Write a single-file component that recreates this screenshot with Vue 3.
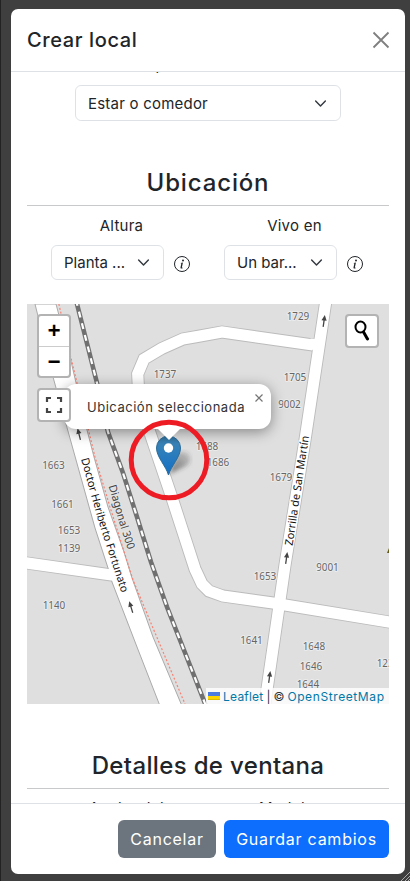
<script setup>
const houses = [
  [298, 320, '1729'], [165, 378, '1737'], [295, 381, '1705'], [289.5, 408, '9002'],
  [207, 450, '1688'], [218, 466, '1686'], [53.5, 469, '1663'], [62.5, 508, '1661'],
  [69, 534, '1653'], [69, 552, '1139'], [281, 481, '1679'], [265, 580, '1653'],
  [327.5, 571, '9001'], [54, 609, '1140'], [251.5, 644, '1641'], [314, 650, '1648'],
  [311, 670, '1646'], [308, 688, '1644'], [388, 667, '1231']
]
const arrows = [[324, 321, 8], [79, 434, -14], [286.5, 558, 8], [131, 607, -17], [269.500, 677, 8]]
const selects = [
  { label: 'Altura', value: 'Planta ...' },
  { label: 'Vivo en', value: 'Un bar...' }
]
</script>

<template>
  <main class="page">
    <section class="modal">
      <header class="head">
        <h1>Crear local</h1>
        <svg class="close" viewBox="0 0 16 16"><path d="M.5.5l15 15M15.500.5l-15 15" /></svg>
      </header>

      <div class="body">
        <div class="kind"><span>Tipo de habitación</span></div>
        <div class="select wide">
          <span>Estar o comedor</span>
          <svg class="chev" viewBox="0 0 16 16"><path d="M2 5l6 6 6-6" /></svg>
        </div>
        <h2 class="location">Ubicación</h2>
        <div class="fields">
          <div v-for="s in selects" :key="s.label" class="field">
            <label>{{ s.label }}</label>
            <div class="row">
              <div class="select">
                <span>{{ s.value }}</span>
                <svg class="chev" viewBox="0 0 16 16"><path d="M2 5l6 6 6-6" /></svg>
              </div>
              <svg class="info" viewBox="0 0 16 16">
                <circle cx="8" cy="8" r="7.5" />
                <path d="M8.93 6.588l-2.29.287-.082.38.45.083c.294.07.352.176.288.469l-.738 3.468c-.194.897.105 1.319.808 1.319.545 0 1.178-.252 1.465-.598l.088-.416c-.2.176-.492.246-.686.246-.275 0-.375-.193-.304-.533z" />
                <circle class="dot" cx="9" cy="4.5" r="1" />
              </svg>
            </div>
          </div>
        </div>

        <div class="map">
          <svg class="tiles" viewBox="27 304 362 400">
            <rect x="27" y="304" width="362" height="400" fill="#dfdfdf" />
            <g class="casing">
              <path d="M313 345L222 332 200 336 183 339 161.700 348.500 144 359 137.700 374 138.500 390 149 430 172 498 195 569 202 584 209 591 223 596 273 603 395 623" />
              <path d="M326 300L305 440 285 565 264 710" />
              <path d="M20 562L115 575.500" />
            </g>
            <path d="M35 304L53 377 66 424 95 528 108 568 112 582 137 647 160 706H182L153 637 132 578 124 552 108 507 94 457 87 430 70 357 56 304z" fill="#fff" stroke="#aaa" stroke-width="1" />
            <g class="road">
              <path d="M313 345L222 332 200 336 183 339 161.700 348.500 144 359 137.700 374 138.500 390 149 430 172 498 195 569 202 584 209 591 223 596 273 603 395 623" />
              <path d="M320 345L310 344" />
              <path d="M326 300L305 440 285 565 264 710" />
              <path d="M20 562L115 575.500" />
            </g>
            <path class="foot" d="M58 300L70 354 88 428 95 457 110 507 133 580 153 628 185 704" />
            <path class="rail" d="M76 300L97 383 108 432 123 473 137 517 151 562 167 607 206 706" />
            <path class="ties" d="M76 300L97 383 108 432 123 473 137 517 151 562 167 607 206 706" />
            <g class="houses">
              <text v-for="h in houses" :key="h[0] + '-' + h[1]" :x="h[0]" :y="h[1]" textLength="22.500">{{ h[2] }}</text>
            </g>
            <g v-for="a in arrows" :key="a[1]" :transform="`translate(${a[0]} ${a[1]}) rotate(${a[2]})`">
              <path d="M0 6V-2" stroke="#444" stroke-width="1.300" /><path d="M0-6L2.600-.5H-2.600z" fill="#444" />
            </g>
            <path id="doctor" d="M81 459L98 520 126 607" fill="none" />
            <text class="street"><textPath href="#doctor" textLength="140">Doctor Heriberto Fortunato</textPath></text>
            <path id="diagonal" d="M108.500 486L118 519 131 560" fill="none" />
            <text class="street pale"><textPath href="#diagonal" textLength="67">Diagonal 300</textPath></text>
            <text class="street" transform="translate(292.500 546) rotate(-81.500)" textLength="111">Zorrilla de San Martín</text>
            <path d="M387 553l2-5v5z" fill="#655b15" />
          </svg>

          <div class="zoomer"><b>+</b><b>−</b></div>
          <div class="full"><svg viewBox="0 0 18 18"><path d="M2 6V2h4M12 2h4v4M16 12v4h-4M6 16H2v-4" /></svg></div>
          <div class="search"><svg viewBox="0 0 18 22"><ellipse cx="7.500" cy="7" rx="5" ry="5.500" /><path d="M10.500 12l4 7" /></svg></div>

          <svg class="marker" viewBox="128 418 90 84">
            <defs>
              <linearGradient id="pin" x2="0" y2="1"><stop offset="0" stop-color="#2e6c97" /><stop offset=".2" stop-color="#3883b7" /><stop offset="1" stop-color="#126fc6" /></linearGradient>
              <linearGradient id="shade" x1="0" y1="1" x2="1" y2="0"><stop offset="0" stop-color="#333" stop-opacity=".65" /><stop offset="1" stop-color="#333" stop-opacity=".15" /></linearGradient>
              <filter id="soft"><feGaussianBlur stdDeviation="2" /></filter>
            </defs>
            <path d="M169 474L178 453Q188 450 190 457T182 468z" fill="url(#shade)" filter="url(#soft)" />
            <path d="M168.500 475C166 466 156.500 457 156.500 448A12 12 0 0 1 180.500 448C180.500 457 171 466 168.500 475z" fill="url(#pin)" stroke="#2e6c97" />
            <circle cx="168.500" cy="448" r="4.700" fill="#fff" />
          </svg>

          <div class="popup"><span>Ubicación seleccionada</span><svg class="pop-close" viewBox="0 0 8 8"><path d="M.5.5l7 7M7.500.5l-7 7" /></svg></div>
          <svg class="ring" viewBox="0 0 82 82"><path d="M30 10h22l-11 11z" fill="#fff" /><circle cx="41" cy="41" r="37.800" /></svg>
          <div class="credit">
            <svg viewBox="0 0 12 8"><path fill="#4C7BE1" d="M0 0h12v4H0z" /><path fill="#FFD500" d="M0 4h12v3H0z" /><path fill="#E0BC00" d="M0 7h12v1H0z" /></svg>
            <a class="leaf">Leaflet</a><span class="sep">|</span><span class="copy">©</span><a class="osm">OpenStreetMap</a>
          </div>
        </div>

        <h2 class="details">Detalles de ventana</h2>
        <div class="cut"><span>Ancho del</span><span>Modelo</span></div>
      </div>

      <footer class="foot-bar">
        <button class="cancel">Cancelar</button>
        <button class="save">Guardar cambios</button>
      </footer>
    </section>
    <svg class="grip" viewBox="0 0 10 10"><path d="M1 10L10 1M5 10L10 5M8 10l2-2" /></svg>
  </main>
</template>

<style>
body { background: #3f3f3f; overflow: hidden; }
</style>

<style scoped>
* { box-sizing: border-box; }
.page { position: relative; width: 410px; height: 881px; padding: 9px 5px 7px 10px; border-left: 1px solid #222; background: #3f3f3f; font-family: Inter, "Liberation Sans", sans-serif; color: #212529; font-size: 15px; }
.modal { width: 394px; height: 865px; background: #fff; border-radius: 7px; display: flex; flex-direction: column; overflow: hidden; }
.head { height: 63px; flex: none; padding: 0 16px; border-bottom: 1px solid #dee2e6; display: flex; justify-content: space-between; align-items: center; }
h1 { margin: 0; font-size: 20px; font-weight: 500; letter-spacing: .62px; }
svg { display: block; flex: none; }
.close { width: 16px; height: 16px; fill: none; stroke: #7f7f7f; stroke-width: 1.8; overflow: visible; }
.body { flex: 1; min-height: 0; overflow: hidden; padding: 0 16px; }
.kind { height: 13px; display: flex; align-items: flex-end; justify-content: center; line-height: 24px; padding-bottom: 8px; }
.select { width: 113px; height: 35px; border: 1px solid #dee2e6; border-radius: 6px; padding: 0 13px 0 12px; display: flex; align-items: center; justify-content: space-between; white-space: nowrap; }
.wide { width: 266px; height: 36px; margin: 0 auto; letter-spacing: .22px; }
.chev { width: 13px; height: 13px; fill: none; stroke: #343a40; stroke-width: 1.8; stroke-linecap: round; stroke-linejoin: round; }
h2 { margin: 0; text-align: center; font-weight: 500; font-size: 24px; line-height: 32px; border-bottom: 1px solid #c8c9ca; }
.location { margin-top: 46px; height: 39px; letter-spacing: .85px; }
.fields { display: flex; gap: 34px; padding: 8px 0 0 24px; }
.field { width: 139px; }
label { display: block; line-height: 24px; width: 141px; text-align: center; letter-spacing: .25px; }
.row { display: flex; align-items: center; gap: 10px; margin-top: 7px; }
.info { width: 16px; height: 16px; margin-top: 3px; fill: #212529; overflow: visible; }
.info circle:first-child { fill: none; stroke: #212529; }
.map { position: relative; margin-top: 24px; width: 362px; height: 400px; overflow: hidden; }
.tiles { width: 362px; height: 400px; }
.casing path { fill: none; stroke: #bbb; stroke-width: 13; }
.road path { fill: none; stroke: #fff; stroke-width: 11.200; }
.foot { fill: none; stroke: #fa8072; stroke-width: 1.200; stroke-dasharray: 2 2; }
.rail { fill: none; stroke: #707070; stroke-width: 4.6; }
.ties { fill: none; stroke: #fff; stroke-width: 2.2; stroke-dasharray: 6 6; }
.houses { font: 10px "Noto Sans"; fill: #666; text-anchor: middle; paint-order: stroke; stroke: #ebebeb; stroke-width: 2px; }
.street { font: 11px "Noto Sans"; fill: #111; paint-order: stroke; stroke: #fff; stroke-width: 2px; }
.pale { fill: #444; stroke: #e5e5e5; }
.zoomer, .full, .search { position: absolute; border: 2px solid #b3b3b3; border-radius: 4px; background: #fff; background-clip: padding-box; }
.zoomer { left: 10px; top: 10px; width: 34px; height: 64px; }
.zoomer b { display: block; height: 30px; font: bold 22px/34px "Liberation Mono", monospace; color: #000; text-align: center; }
.zoomer b:first-child { height: 31px; border-bottom: 1px solid #ccc; }
.full { left: 10px; top: 84px; width: 34px; height: 34px; display: grid; place-items: center; }
.full svg { width: 18px; height: 18px; fill: none; stroke: #444; stroke-width: 2.200; }
.search { left: 318px; top: 10px; width: 34px; height: 34px; display: grid; place-items: center; }
.search svg { width: 18px; height: 22px; fill: none; stroke: #000; stroke-width: 2; stroke-linecap: round; }
.search path { stroke-width: 3; }
.marker { position: absolute; left: 101px; top: 114px; width: 90px; height: 84px; }
.popup { position: absolute; left: 37px; top: 80px; width: 207px; height: 45px; border-radius: 12px; background: #fff; box-shadow: 0 3px 14px rgba(0,0,0,.4); display: flex; align-items: center; padding-left: 23px; color: #333; font-size: 13px; white-space: nowrap; letter-spacing: .52px; }
.full { z-index: 2; }
.pop-close { position: absolute; right: 8px; top: 10px; width: 8px; height: 8px; fill: none; stroke: #757575; stroke-width: 1.200; }
.ring { position: absolute; left: 101px; top: 115px; width: 82px; height: 82px; fill: none; stroke: #ed1c24; stroke-width: 5; }
.ring path { stroke: none; }
.credit { position: absolute; right: 0; bottom: 0; height: 16px; padding: 0 5px 0 2px; background: rgba(255,255,255,.8); display: flex; align-items: center; font-size: 12px; white-space: nowrap; color: #333; }
.credit svg { width: 12px; height: 8px; margin-right: 3px; }
.credit a { color: #0078a8; }
.leaf { letter-spacing: .2px; }
.osm { letter-spacing: .6px; margin-right: -.6px; }
.sep { margin: 0 3px; }
.copy { margin-right: 3px; }
.details { margin-top: 46px; height: 39px; letter-spacing: .35px; }
.cut { display: flex; height: 20px; line-height: 24px; padding-top: 7px; }
.cut span { width: 50%; padding-left: 62px; letter-spacing: .4px; }
.cut span + span { padding-left: 51px; }
.foot-bar { height: 71px; flex: none; border-top: 1px solid #dee2e6; padding: 0 16px; display: flex; align-items: center; justify-content: flex-end; gap: 8px; }
button { border: 0; border-radius: 6px; height: 38px; padding: 0; color: #fff; font: 16px Inter, sans-serif; letter-spacing: .75px; }
.cancel { width: 98px; background: #6c757d; }
.save { width: 165px; background: #0d6efd; }
.grip { position: absolute; right: 0; bottom: 0; width: 10px; height: 10px; fill: none; stroke: #aaa; stroke-width: 1; }
</style>
